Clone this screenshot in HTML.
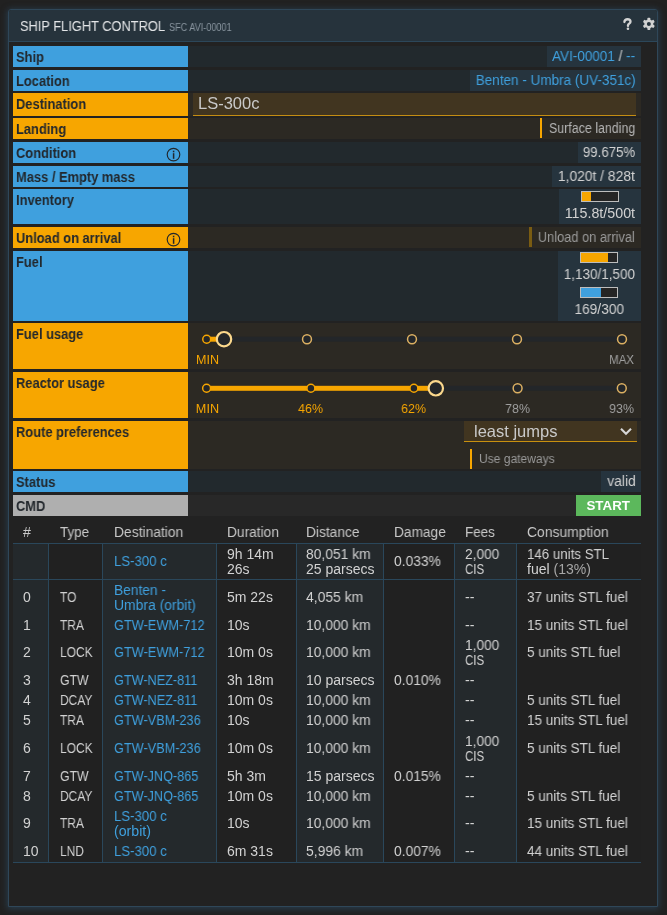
<!DOCTYPE html>
<html><head><meta charset="utf-8">
<style>
*{margin:0;padding:0;box-sizing:border-box}
html,body{width:667px;height:915px;overflow:hidden;background:#212121;font-family:"Liberation Sans",sans-serif}
.a{position:absolute}
.tx{position:absolute;white-space:nowrap;line-height:20px;will-change:transform}
#panel{position:absolute;left:8px;top:9px;width:650px;height:898px;border:1px solid #2f4759;border-radius:3px 3px 0 0;background:#222222;box-shadow:0 1px 6px 1px rgba(45,78,105,0.6)}
#hdr{position:absolute;left:9px;top:10px;width:648px;height:32px;border-radius:2px 2px 0 0;background:#26333c;border-bottom:1px solid #2c475a}
</style></head><body>
<div id="panel"></div>
<div id="hdr"></div>
<svg class="a" style="left:622px;top:17px" width="11" height="14" viewBox="0 0 11 14"><path d="M2.4 5.0 C2.4 2.9 3.7 2.25 5.5 2.25 C7.3 2.25 8.5 3.2 8.5 4.7 C8.5 6.5 6.3 6.7 6.0 8.2 L6.0 8.9" fill="none" stroke="#d4d4d4" stroke-width="2.3" stroke-linecap="round"/><circle cx="5.95" cy="11.7" r="1.3" fill="#d4d4d4"/></svg>
<svg class="a" style="left:642px;top:17px" width="14" height="14" viewBox="0 0 14 14"><g transform="translate(6.85 6.9)" fill="#d2d2d2"><circle r="4.5"/><rect x="-1.45" y="-6.1" width="2.9" height="3" rx="0.8" transform="rotate(0)"/><rect x="-1.45" y="-6.1" width="2.9" height="3" rx="0.8" transform="rotate(60)"/><rect x="-1.45" y="-6.1" width="2.9" height="3" rx="0.8" transform="rotate(120)"/><rect x="-1.45" y="-6.1" width="2.9" height="3" rx="0.8" transform="rotate(180)"/><rect x="-1.45" y="-6.1" width="2.9" height="3" rx="0.8" transform="rotate(240)"/><rect x="-1.45" y="-6.1" width="2.9" height="3" rx="0.8" transform="rotate(300)"/><circle r="2.0" fill="#26333c"/></g></svg>
<div class="a" style="left:13px;top:46px;width:175px;height:21px;background:#3fa0de;"></div>
<div class="a" style="left:188px;top:46px;width:453px;height:21px;background:#22292d;"></div>
<div class="a" style="left:13px;top:70px;width:175px;height:21px;background:#3fa0de;"></div>
<div class="a" style="left:188px;top:70px;width:453px;height:21px;background:#22292d;"></div>
<div class="a" style="left:13px;top:93px;width:175px;height:23px;background:#f7a600;"></div>
<div class="a" style="left:188px;top:93px;width:453px;height:23px;background:#2c2923;"></div>
<div class="a" style="left:13px;top:118px;width:175px;height:21px;background:#f7a600;"></div>
<div class="a" style="left:188px;top:118px;width:453px;height:21px;background:#2c2923;"></div>
<div class="a" style="left:13px;top:142px;width:175px;height:21px;background:#3fa0de;"></div>
<div class="a" style="left:188px;top:142px;width:453px;height:21px;background:#22292d;"></div>
<div class="a" style="left:13px;top:166px;width:175px;height:21px;background:#3fa0de;"></div>
<div class="a" style="left:188px;top:166px;width:453px;height:21px;background:#22292d;"></div>
<div class="a" style="left:13px;top:189px;width:175px;height:35px;background:#3fa0de;"></div>
<div class="a" style="left:188px;top:189px;width:453px;height:35px;background:#22292d;"></div>
<div class="a" style="left:13px;top:227px;width:175px;height:21px;background:#f7a600;"></div>
<div class="a" style="left:188px;top:227px;width:453px;height:21px;background:#2c2923;"></div>
<div class="a" style="left:13px;top:251px;width:175px;height:70px;background:#3fa0de;"></div>
<div class="a" style="left:188px;top:251px;width:453px;height:70px;background:#22292d;"></div>
<div class="a" style="left:13px;top:323px;width:175px;height:46px;background:#f7a600;"></div>
<div class="a" style="left:188px;top:323px;width:453px;height:46px;background:#2c2923;"></div>
<div class="a" style="left:13px;top:372px;width:175px;height:46px;background:#f7a600;"></div>
<div class="a" style="left:188px;top:372px;width:453px;height:46px;background:#2c2923;"></div>
<div class="a" style="left:13px;top:421px;width:175px;height:48px;background:#f7a600;"></div>
<div class="a" style="left:188px;top:421px;width:453px;height:48px;background:#2c2923;"></div>
<div class="a" style="left:13px;top:471px;width:175px;height:21px;background:#3fa0de;"></div>
<div class="a" style="left:188px;top:471px;width:453px;height:21px;background:#22292d;"></div>
<div class="a" style="left:13px;top:495px;width:175px;height:21px;background:#afafaf;"></div>
<div class="a" style="left:188px;top:495px;width:453px;height:21px;background:#282828;"></div>
<svg class="a" style="left:166px;top:146.5px" width="15" height="15" viewBox="0 0 15 15"><circle cx="7.5" cy="7.6" r="6.3" fill="none" stroke="#22272c" stroke-width="1.15"/><rect x="6.85" y="3.7" width="1.5" height="1.6" fill="#22272c"/><rect x="6.85" y="6.2" width="1.5" height="5.6" fill="#22272c"/></svg>
<svg class="a" style="left:166px;top:231.5px" width="15" height="15" viewBox="0 0 15 15"><circle cx="7.5" cy="7.6" r="6.3" fill="none" stroke="#22272c" stroke-width="1.15"/><rect x="6.85" y="3.7" width="1.5" height="1.6" fill="#22272c"/><rect x="6.85" y="6.2" width="1.5" height="5.6" fill="#22272c"/></svg>
<div class="a" style="left:546.8px;top:46px;width:94.20000000000005px;height:21px;background:#26343e;"></div>
<div class="a" style="left:469.7px;top:70px;width:171.3px;height:21px;background:#26343e;"></div>
<div class="a" style="left:193px;top:93px;width:443px;height:23px;background:#413520;border-bottom:1px solid #c48d12"></div>
<div class="a" style="left:540px;top:118px;width:2.4px;height:20px;background:#f7a600;"></div>
<div class="a" style="left:578px;top:142px;width:63px;height:21px;background:#26343e;"></div>
<div class="a" style="left:552px;top:166px;width:89px;height:21px;background:#26343e;"></div>
<div class="a" style="left:558.8px;top:189px;width:82.20000000000005px;height:35px;background:#26343e;"></div>
<div class="a" style="left:581px;top:191px;width:38px;height:11px;border:1px solid #bdbdbd;background:#252525"><div style="width:8.5px;height:9px;background:#f7a600"></div></div>
<div class="a" style="left:529px;top:227px;width:2.5px;height:20px;background:#7a5c12;"></div>
<div class="a" style="left:558px;top:251px;width:83px;height:70px;background:#26343e;"></div>
<div class="a" style="left:580px;top:252px;width:38px;height:11px;border:1px solid #bdbdbd;background:#252525"><div style="width:27px;height:9px;background:#f7a600"></div></div>
<div class="a" style="left:580px;top:287px;width:38px;height:11px;border:1px solid #bdbdbd;background:#252525"><div style="width:20px;height:9px;background:#3fa0de"></div></div>
<div class="a" style="left:464px;top:421px;width:172.5px;height:21px;background:#413520;border-bottom:1px solid #c8900f"></div>
<svg class="a" style="left:619px;top:427px" width="14" height="10" viewBox="0 0 14 10"><path d="M2 1.8 L7 6.8 L12 1.8" fill="none" stroke="#d6d6d6" stroke-width="2.1"/></svg>
<div class="a" style="left:469.5px;top:448.7px;width:2.5px;height:20.3px;background:#f7a600;"></div>
<div class="a" style="left:601px;top:471px;width:40px;height:21px;background:#26343e;"></div>
<div class="a" style="left:576px;top:495px;width:65px;height:21px;background:#5cb85c;"></div>
<svg class="a" style="left:188px;top:327px" width="453" height="24" viewBox="0 0 453 24"><rect x="18.70" y="9.70" width="415.30" height="5" fill="#232629"/><rect x="18.70" y="9.70" width="17.30" height="5" fill="#f7a600"/><circle cx="18.70" cy="12.20" r="3.95" fill="#232629" stroke="#f7a600" stroke-width="1.5"/><circle cx="119.00" cy="12.20" r="4.45" fill="#232629" stroke="#dcb062" stroke-width="1.5"/><circle cx="224.00" cy="12.20" r="4.45" fill="#232629" stroke="#dcb062" stroke-width="1.5"/><circle cx="329.00" cy="12.20" r="4.45" fill="#232629" stroke="#dcb062" stroke-width="1.5"/><circle cx="434.00" cy="12.20" r="4.45" fill="#232629" stroke="#dcb062" stroke-width="1.5"/><circle cx="36.00" cy="12.20" r="7.2" fill="#232629" stroke="#fbd88c" stroke-width="2.2"/></svg>
<svg class="a" style="left:188px;top:376px" width="453" height="24" viewBox="0 0 453 24"><rect x="18.60" y="9.80" width="415.20" height="5" fill="#232629"/><rect x="18.60" y="9.80" width="229.20" height="5" fill="#f7a600"/><circle cx="18.60" cy="12.30" r="3.95" fill="#232629" stroke="#f7a600" stroke-width="1.5"/><circle cx="122.90" cy="12.30" r="3.95" fill="#232629" stroke="#f7a600" stroke-width="1.5"/><circle cx="225.90" cy="12.30" r="3.95" fill="#232629" stroke="#f7a600" stroke-width="1.5"/><circle cx="329.60" cy="12.30" r="4.45" fill="#232629" stroke="#dcb062" stroke-width="1.5"/><circle cx="433.80" cy="12.30" r="4.45" fill="#232629" stroke="#dcb062" stroke-width="1.5"/><circle cx="247.80" cy="12.30" r="7.2" fill="#232629" stroke="#fbd88c" stroke-width="2.2"/></svg>
<div class="a" style="left:13px;top:544px;width:35px;height:318px;background:#24292c;"></div>
<div class="a" style="left:48px;top:544px;width:54px;height:318px;background:#212121;"></div>
<div class="a" style="left:102px;top:544px;width:114.5px;height:318px;background:#24292c;"></div>
<div class="a" style="left:216.5px;top:544px;width:80.0px;height:318px;background:#212121;"></div>
<div class="a" style="left:296.5px;top:544px;width:87.0px;height:318px;background:#24292c;"></div>
<div class="a" style="left:383.5px;top:544px;width:71.0px;height:318px;background:#212121;"></div>
<div class="a" style="left:454.5px;top:544px;width:62.2px;height:318px;background:#24292c;"></div>
<div class="a" style="left:516.7px;top:544px;width:124.3px;height:318px;background:#212121;"></div>
<div class="a" style="left:13px;top:543px;width:628px;height:1px;background:#2a475b;"></div>
<div class="a" style="left:13px;top:579px;width:628px;height:1px;background:#2a475b;"></div>
<div class="a" style="left:13px;top:862px;width:628px;height:1px;background:#2a475b;"></div>
<div class="a" style="left:47.5px;top:543px;width:1px;height:319px;background:#2a475b;"></div>
<div class="a" style="left:101.5px;top:543px;width:1px;height:319px;background:#2a475b;"></div>
<div class="a" style="left:216.0px;top:543px;width:1px;height:319px;background:#2a475b;"></div>
<div class="a" style="left:296.0px;top:543px;width:1px;height:319px;background:#2a475b;"></div>
<div class="a" style="left:383.0px;top:543px;width:1px;height:319px;background:#2a475b;"></div>
<div class="a" style="left:454.0px;top:543px;width:1px;height:319px;background:#2a475b;"></div>
<div class="a" style="left:516.2px;top:543px;width:1px;height:319px;background:#2a475b;"></div>
<div class="tx" style="left:19.50px;top:16.05px;font-size:14px;color:#e4e6e8;transform:scaleX(0.9166);transform-origin:left">SHIP FLIGHT CONTROL</div>
<div class="tx" style="left:168.60px;top:17.84px;font-size:10px;color:#8a96a0;transform:scaleX(0.9105);transform-origin:left">SFC AVI-00001</div>
<div class="tx" style="left:15.90px;top:46.75px;font-size:14px;color:#22272c;font-weight:bold;transform:scaleX(0.9200);transform-origin:left">Ship</div>
<div class="tx" style="left:15.90px;top:70.75px;font-size:14px;color:#22272c;font-weight:bold;transform:scaleX(0.9200);transform-origin:left">Location</div>
<div class="tx" style="left:15.90px;top:93.75px;font-size:14px;color:#22272c;font-weight:bold;transform:scaleX(0.9200);transform-origin:left">Destination</div>
<div class="tx" style="left:15.90px;top:118.75px;font-size:14px;color:#22272c;font-weight:bold;transform:scaleX(0.9200);transform-origin:left">Landing</div>
<div class="tx" style="left:15.90px;top:142.75px;font-size:14px;color:#22272c;font-weight:bold;transform:scaleX(0.9200);transform-origin:left">Condition</div>
<div class="tx" style="left:15.90px;top:166.75px;font-size:14px;color:#22272c;font-weight:bold;transform:scaleX(0.9200);transform-origin:left">Mass / Empty mass</div>
<div class="tx" style="left:15.90px;top:189.75px;font-size:14px;color:#22272c;font-weight:bold;transform:scaleX(0.9200);transform-origin:left">Inventory</div>
<div class="tx" style="left:15.90px;top:227.75px;font-size:14px;color:#22272c;font-weight:bold;transform:scaleX(0.9200);transform-origin:left">Unload on arrival</div>
<div class="tx" style="left:15.90px;top:251.75px;font-size:14px;color:#22272c;font-weight:bold;transform:scaleX(0.9200);transform-origin:left">Fuel</div>
<div class="tx" style="left:15.90px;top:323.75px;font-size:14px;color:#22272c;font-weight:bold;transform:scaleX(0.9200);transform-origin:left">Fuel usage</div>
<div class="tx" style="left:15.90px;top:372.75px;font-size:14px;color:#22272c;font-weight:bold;transform:scaleX(0.9200);transform-origin:left">Reactor usage</div>
<div class="tx" style="left:15.90px;top:421.75px;font-size:14px;color:#22272c;font-weight:bold;transform:scaleX(0.9200);transform-origin:left">Route preferences</div>
<div class="tx" style="left:15.90px;top:471.75px;font-size:14px;color:#22272c;font-weight:bold;transform:scaleX(0.9200);transform-origin:left">Status</div>
<div class="tx" style="left:15.90px;top:495.75px;font-size:14px;color:#22272c;font-weight:bold;transform:scaleX(0.9200);transform-origin:left">CMD</div>
<div class="tx" style="left:549.17px;top:46.35px;font-size:14px;color:#d2d2d2;transform:scaleX(0.9649);transform-origin:right"><span style="color:#3fa0de">AVI-00001</span> / <span style="color:#3fa0de">--</span></div>
<div class="tx" style="left:469.57px;top:70.35px;font-size:14px;color:#3fa0de;transform:scaleX(0.9654);transform-origin:right">Benten - Umbra (UV-351c)</div>
<div class="tx" style="left:198.20px;top:93.28px;font-size:16.5px;color:#c9c9c9">LS-300c</div>
<div class="tx" style="left:538.00px;top:117.75px;font-size:14px;color:#b4b4b4;transform:scaleX(0.8870);transform-origin:right">Surface landing</div>
<div class="tx" style="left:580.02px;top:142.05px;font-size:14px;color:#d2d2d2;transform:scaleX(0.9479);transform-origin:right">99.675%</div>
<div class="tx" style="left:557.46px;top:165.85px;font-size:14px;color:#d2d2d2;transform:scaleX(0.9892);transform-origin:right">1,020t / 828t</div>
<div class="tx" style="left:566.27px;top:203.25px;font-size:14px;color:#d2d2d2;transform:scaleX(1.0184);transform-origin:right">115.8t/500t</div>
<div class="tx" style="left:529.46px;top:226.95px;font-size:14px;color:#9a9a9a;transform:scaleX(0.9164);transform-origin:right">Unload on arrival</div>
<div class="tx" style="left:561.33px;top:263.85px;font-size:14px;color:#d2d2d2;transform:scaleX(0.9626);transform-origin:right">1,130/1,500</div>
<div class="tx" style="left:574.10px;top:298.75px;font-size:14px;color:#d2d2d2;transform:scaleX(0.9801);transform-origin:center">169/300</div>
<div class="tx" style="left:473.50px;top:420.78px;font-size:16.5px;color:#c9c9c9">least jumps</div>
<div class="tx" style="left:478.80px;top:449.07px;font-size:12.5px;color:#9a9a9a;transform:scaleX(0.9641);transform-origin:left">Use gateways</div>
<div class="tx" style="left:606.50px;top:471.15px;font-size:14px;color:#d2d2d2;transform:scaleX(0.9897);transform-origin:right">valid</div>
<div class="tx" style="left:586.71px;top:495.50px;font-size:13px;color:#ffffff;font-weight:bold;transform:scaleX(1.0265);transform-origin:center">START</div>
<div class="tx" style="left:195.74px;top:349.97px;font-size:12.5px;color:#f7a600;transform:scaleX(1.0034);transform-origin:center">MIN</div>
<div class="tx" style="left:608.25px;top:349.57px;font-size:12.5px;color:#a0a0a0;transform:scaleX(0.9116);transform-origin:center">MAX</div>
<div class="tx" style="left:195.74px;top:398.57px;font-size:12.5px;color:#f7a600;transform:scaleX(1.0121);transform-origin:center">MIN</div>
<div class="tx" style="left:298.38px;top:398.57px;font-size:12.5px;color:#f7a600;transform:scaleX(0.9877);transform-origin:center">46%</div>
<div class="tx" style="left:401.38px;top:398.57px;font-size:12.5px;color:#f7a600;transform:scaleX(0.9877);transform-origin:center">62%</div>
<div class="tx" style="left:505.08px;top:398.57px;font-size:12.5px;color:#a0a0a0;transform:scaleX(0.9877);transform-origin:center">78%</div>
<div class="tx" style="left:609.28px;top:398.57px;font-size:12.5px;color:#a0a0a0;transform:scaleX(0.9877);transform-origin:center">93%</div>
<div class="tx" style="left:23.30px;top:522.15px;font-size:14px;color:#c8c8c8;transform:scaleX(1.0113);transform-origin:left">#</div>
<div class="tx" style="left:59.50px;top:522.15px;font-size:14px;color:#c8c8c8;transform:scaleX(0.9602);transform-origin:left">Type</div>
<div class="tx" style="left:113.50px;top:522.15px;font-size:14px;color:#c8c8c8;transform:scaleX(0.9884);transform-origin:left">Destination</div>
<div class="tx" style="left:226.80px;top:522.15px;font-size:14px;color:#c8c8c8;transform:scaleX(0.9814);transform-origin:left">Duration</div>
<div class="tx" style="left:305.80px;top:522.15px;font-size:14px;color:#c8c8c8;transform:scaleX(0.9820);transform-origin:left">Distance</div>
<div class="tx" style="left:394.00px;top:522.15px;font-size:14px;color:#c8c8c8;transform:scaleX(0.9793);transform-origin:left">Damage</div>
<div class="tx" style="left:464.60px;top:522.15px;font-size:14px;color:#c8c8c8;transform:scaleX(0.9612);transform-origin:left">Fees</div>
<div class="tx" style="left:527.30px;top:522.15px;font-size:14px;color:#c8c8c8;transform:scaleX(0.9901);transform-origin:left">Consumption</div>
<div class="tx" style="left:113.50px;top:551.05px;font-size:14px;color:#3fa0de;transform:scaleX(0.9439);transform-origin:left">LS-300 c</div>
<div class="tx" style="left:226.80px;top:543.55px;font-size:14px;color:#d2d2d2;transform:scaleX(0.9910);transform-origin:left">9h 14m</div>
<div class="tx" style="left:226.80px;top:558.55px;font-size:14px;color:#d2d2d2;transform:scaleX(0.9834);transform-origin:left">26s</div>
<div class="tx" style="left:305.80px;top:543.55px;font-size:14px;color:#d2d2d2;transform:scaleX(0.9883);transform-origin:left">80,051 km</div>
<div class="tx" style="left:305.80px;top:558.55px;font-size:14px;color:#d2d2d2">25 parsecs</div>
<div class="tx" style="left:394.00px;top:551.05px;font-size:14px;color:#d2d2d2;transform:scaleX(0.9855);transform-origin:left">0.033%</div>
<div class="tx" style="left:464.60px;top:543.55px;font-size:14px;color:#d2d2d2;transform:scaleX(0.9779);transform-origin:left">2,000</div>
<div class="tx" style="left:464.60px;top:558.55px;font-size:14px;color:#d2d2d2;transform:scaleX(0.8231);transform-origin:left">CIS</div>
<div class="tx" style="left:527.30px;top:543.55px;font-size:14px;color:#d2d2d2;transform:scaleX(0.9506);transform-origin:left">146 units STL</div>
<div class="tx" style="left:527.30px;top:558.55px;font-size:14px;color:#d2d2d2;transform:scaleX(1.0027);transform-origin:left">fuel <span style="color:#a6a6a6">(13%)</span></div>
<div class="tx" style="left:23.30px;top:587.15px;font-size:14px;color:#d2d2d2;transform:scaleX(0.9723);transform-origin:left">0</div>
<div class="tx" style="left:59.50px;top:587.15px;font-size:14px;color:#d2d2d2;transform:scaleX(0.8566);transform-origin:left">TO</div>
<div class="tx" style="left:113.50px;top:579.65px;font-size:14px;color:#3fa0de;transform:scaleX(0.9831);transform-origin:left">Benten -</div>
<div class="tx" style="left:113.50px;top:594.65px;font-size:14px;color:#3fa0de;transform:scaleX(0.9929);transform-origin:left">Umbra (orbit)</div>
<div class="tx" style="left:226.80px;top:587.15px;font-size:14px;color:#d2d2d2;transform:scaleX(0.9908);transform-origin:left">5m 22s</div>
<div class="tx" style="left:305.80px;top:587.15px;font-size:14px;color:#d2d2d2;transform:scaleX(0.9905);transform-origin:left">4,055 km</div>
<div class="tx" style="left:464.60px;top:587.15px;font-size:14px;color:#d2d2d2;transform:scaleX(1.0188);transform-origin:left">--</div>
<div class="tx" style="left:527.30px;top:587.15px;font-size:14px;color:#d2d2d2;transform:scaleX(0.9645);transform-origin:left">37 units STL fuel</div>
<div class="tx" style="left:23.30px;top:615.15px;font-size:14px;color:#d2d2d2;transform:scaleX(0.9723);transform-origin:left">1</div>
<div class="tx" style="left:59.50px;top:615.15px;font-size:14px;color:#d2d2d2;transform:scaleX(0.8525);transform-origin:left">TRA</div>
<div class="tx" style="left:113.50px;top:615.15px;font-size:14px;color:#3fa0de;transform:scaleX(0.9121);transform-origin:left">GTW-EWM-712</div>
<div class="tx" style="left:226.80px;top:615.15px;font-size:14px;color:#d2d2d2;transform:scaleX(0.9834);transform-origin:left">10s</div>
<div class="tx" style="left:305.80px;top:615.15px;font-size:14px;color:#d2d2d2;transform:scaleX(0.9883);transform-origin:left">10,000 km</div>
<div class="tx" style="left:464.60px;top:615.15px;font-size:14px;color:#d2d2d2;transform:scaleX(1.0188);transform-origin:left">--</div>
<div class="tx" style="left:527.30px;top:615.15px;font-size:14px;color:#d2d2d2;transform:scaleX(0.9645);transform-origin:left">15 units STL fuel</div>
<div class="tx" style="left:23.30px;top:642.15px;font-size:14px;color:#d2d2d2;transform:scaleX(0.9723);transform-origin:left">2</div>
<div class="tx" style="left:59.50px;top:642.15px;font-size:14px;color:#d2d2d2;transform:scaleX(0.8556);transform-origin:left">LOCK</div>
<div class="tx" style="left:113.50px;top:642.15px;font-size:14px;color:#3fa0de;transform:scaleX(0.9121);transform-origin:left">GTW-EWM-712</div>
<div class="tx" style="left:226.80px;top:642.15px;font-size:14px;color:#d2d2d2;transform:scaleX(0.9908);transform-origin:left">10m 0s</div>
<div class="tx" style="left:305.80px;top:642.15px;font-size:14px;color:#d2d2d2;transform:scaleX(0.9883);transform-origin:left">10,000 km</div>
<div class="tx" style="left:464.60px;top:634.65px;font-size:14px;color:#d2d2d2;transform:scaleX(0.9779);transform-origin:left">1,000</div>
<div class="tx" style="left:464.60px;top:649.65px;font-size:14px;color:#d2d2d2;transform:scaleX(0.8231);transform-origin:left">CIS</div>
<div class="tx" style="left:527.30px;top:642.15px;font-size:14px;color:#d2d2d2;transform:scaleX(0.9638);transform-origin:left">5 units STL fuel</div>
<div class="tx" style="left:23.30px;top:670.15px;font-size:14px;color:#d2d2d2;transform:scaleX(0.9723);transform-origin:left">3</div>
<div class="tx" style="left:59.50px;top:670.15px;font-size:14px;color:#d2d2d2;transform:scaleX(0.8736);transform-origin:left">GTW</div>
<div class="tx" style="left:113.50px;top:670.15px;font-size:14px;color:#3fa0de;transform:scaleX(0.9052);transform-origin:left">GTW-NEZ-811</div>
<div class="tx" style="left:226.80px;top:670.15px;font-size:14px;color:#d2d2d2;transform:scaleX(0.9910);transform-origin:left">3h 18m</div>
<div class="tx" style="left:305.80px;top:670.15px;font-size:14px;color:#d2d2d2">10 parsecs</div>
<div class="tx" style="left:394.00px;top:670.15px;font-size:14px;color:#d2d2d2;transform:scaleX(0.9855);transform-origin:left">0.010%</div>
<div class="tx" style="left:464.60px;top:670.15px;font-size:14px;color:#d2d2d2;transform:scaleX(1.0188);transform-origin:left">--</div>
<div class="tx" style="left:23.30px;top:690.15px;font-size:14px;color:#d2d2d2;transform:scaleX(0.9723);transform-origin:left">4</div>
<div class="tx" style="left:59.50px;top:690.15px;font-size:14px;color:#d2d2d2;transform:scaleX(0.8546);transform-origin:left">DCAY</div>
<div class="tx" style="left:113.50px;top:690.15px;font-size:14px;color:#3fa0de;transform:scaleX(0.9052);transform-origin:left">GTW-NEZ-811</div>
<div class="tx" style="left:226.80px;top:690.15px;font-size:14px;color:#d2d2d2;transform:scaleX(0.9908);transform-origin:left">10m 0s</div>
<div class="tx" style="left:305.80px;top:690.15px;font-size:14px;color:#d2d2d2;transform:scaleX(0.9883);transform-origin:left">10,000 km</div>
<div class="tx" style="left:464.60px;top:690.15px;font-size:14px;color:#d2d2d2;transform:scaleX(1.0188);transform-origin:left">--</div>
<div class="tx" style="left:527.30px;top:690.15px;font-size:14px;color:#d2d2d2;transform:scaleX(0.9638);transform-origin:left">5 units STL fuel</div>
<div class="tx" style="left:23.30px;top:710.15px;font-size:14px;color:#d2d2d2;transform:scaleX(0.9723);transform-origin:left">5</div>
<div class="tx" style="left:59.50px;top:710.15px;font-size:14px;color:#d2d2d2;transform:scaleX(0.8525);transform-origin:left">TRA</div>
<div class="tx" style="left:113.50px;top:710.15px;font-size:14px;color:#3fa0de;transform:scaleX(0.9085);transform-origin:left">GTW-VBM-236</div>
<div class="tx" style="left:226.80px;top:710.15px;font-size:14px;color:#d2d2d2;transform:scaleX(0.9834);transform-origin:left">10s</div>
<div class="tx" style="left:305.80px;top:710.15px;font-size:14px;color:#d2d2d2;transform:scaleX(0.9883);transform-origin:left">10,000 km</div>
<div class="tx" style="left:464.60px;top:710.15px;font-size:14px;color:#d2d2d2;transform:scaleX(1.0188);transform-origin:left">--</div>
<div class="tx" style="left:527.30px;top:710.15px;font-size:14px;color:#d2d2d2;transform:scaleX(0.9645);transform-origin:left">15 units STL fuel</div>
<div class="tx" style="left:23.30px;top:738.15px;font-size:14px;color:#d2d2d2;transform:scaleX(0.9723);transform-origin:left">6</div>
<div class="tx" style="left:59.50px;top:738.15px;font-size:14px;color:#d2d2d2;transform:scaleX(0.8556);transform-origin:left">LOCK</div>
<div class="tx" style="left:113.50px;top:738.15px;font-size:14px;color:#3fa0de;transform:scaleX(0.9085);transform-origin:left">GTW-VBM-236</div>
<div class="tx" style="left:226.80px;top:738.15px;font-size:14px;color:#d2d2d2;transform:scaleX(0.9908);transform-origin:left">10m 0s</div>
<div class="tx" style="left:305.80px;top:738.15px;font-size:14px;color:#d2d2d2;transform:scaleX(0.9883);transform-origin:left">10,000 km</div>
<div class="tx" style="left:464.60px;top:730.65px;font-size:14px;color:#d2d2d2;transform:scaleX(0.9779);transform-origin:left">1,000</div>
<div class="tx" style="left:464.60px;top:745.65px;font-size:14px;color:#d2d2d2;transform:scaleX(0.8231);transform-origin:left">CIS</div>
<div class="tx" style="left:527.30px;top:738.15px;font-size:14px;color:#d2d2d2;transform:scaleX(0.9638);transform-origin:left">5 units STL fuel</div>
<div class="tx" style="left:23.30px;top:766.15px;font-size:14px;color:#d2d2d2;transform:scaleX(0.9723);transform-origin:left">7</div>
<div class="tx" style="left:59.50px;top:766.15px;font-size:14px;color:#d2d2d2;transform:scaleX(0.8736);transform-origin:left">GTW</div>
<div class="tx" style="left:113.50px;top:766.15px;font-size:14px;color:#3fa0de;transform:scaleX(0.9062);transform-origin:left">GTW-JNQ-865</div>
<div class="tx" style="left:226.80px;top:766.15px;font-size:14px;color:#d2d2d2;transform:scaleX(0.9947);transform-origin:left">5h 3m</div>
<div class="tx" style="left:305.80px;top:766.15px;font-size:14px;color:#d2d2d2">15 parsecs</div>
<div class="tx" style="left:394.00px;top:766.15px;font-size:14px;color:#d2d2d2;transform:scaleX(0.9855);transform-origin:left">0.015%</div>
<div class="tx" style="left:464.60px;top:766.15px;font-size:14px;color:#d2d2d2;transform:scaleX(1.0188);transform-origin:left">--</div>
<div class="tx" style="left:23.30px;top:786.15px;font-size:14px;color:#d2d2d2;transform:scaleX(0.9723);transform-origin:left">8</div>
<div class="tx" style="left:59.50px;top:786.15px;font-size:14px;color:#d2d2d2;transform:scaleX(0.8546);transform-origin:left">DCAY</div>
<div class="tx" style="left:113.50px;top:786.15px;font-size:14px;color:#3fa0de;transform:scaleX(0.9062);transform-origin:left">GTW-JNQ-865</div>
<div class="tx" style="left:226.80px;top:786.15px;font-size:14px;color:#d2d2d2;transform:scaleX(0.9908);transform-origin:left">10m 0s</div>
<div class="tx" style="left:305.80px;top:786.15px;font-size:14px;color:#d2d2d2;transform:scaleX(0.9883);transform-origin:left">10,000 km</div>
<div class="tx" style="left:464.60px;top:786.15px;font-size:14px;color:#d2d2d2;transform:scaleX(1.0188);transform-origin:left">--</div>
<div class="tx" style="left:527.30px;top:786.15px;font-size:14px;color:#d2d2d2;transform:scaleX(0.9638);transform-origin:left">5 units STL fuel</div>
<div class="tx" style="left:23.30px;top:813.15px;font-size:14px;color:#d2d2d2;transform:scaleX(0.9723);transform-origin:left">9</div>
<div class="tx" style="left:59.50px;top:813.15px;font-size:14px;color:#d2d2d2;transform:scaleX(0.8525);transform-origin:left">TRA</div>
<div class="tx" style="left:113.50px;top:805.65px;font-size:14px;color:#3fa0de;transform:scaleX(0.9439);transform-origin:left">LS-300 c</div>
<div class="tx" style="left:113.50px;top:820.65px;font-size:14px;color:#3fa0de;transform:scaleX(1.0125);transform-origin:left">(orbit)</div>
<div class="tx" style="left:226.80px;top:813.15px;font-size:14px;color:#d2d2d2;transform:scaleX(0.9834);transform-origin:left">10s</div>
<div class="tx" style="left:305.80px;top:813.15px;font-size:14px;color:#d2d2d2;transform:scaleX(0.9883);transform-origin:left">10,000 km</div>
<div class="tx" style="left:464.60px;top:813.15px;font-size:14px;color:#d2d2d2;transform:scaleX(1.0188);transform-origin:left">--</div>
<div class="tx" style="left:527.30px;top:813.15px;font-size:14px;color:#d2d2d2;transform:scaleX(0.9645);transform-origin:left">15 units STL fuel</div>
<div class="tx" style="left:23.30px;top:841.15px;font-size:14px;color:#d2d2d2;transform:scaleX(0.9723);transform-origin:left">10</div>
<div class="tx" style="left:59.50px;top:841.15px;font-size:14px;color:#d2d2d2;transform:scaleX(0.8526);transform-origin:left">LND</div>
<div class="tx" style="left:113.50px;top:841.15px;font-size:14px;color:#3fa0de;transform:scaleX(0.9439);transform-origin:left">LS-300 c</div>
<div class="tx" style="left:226.80px;top:841.15px;font-size:14px;color:#d2d2d2;transform:scaleX(0.9908);transform-origin:left">6m 31s</div>
<div class="tx" style="left:305.80px;top:841.15px;font-size:14px;color:#d2d2d2;transform:scaleX(0.9905);transform-origin:left">5,996 km</div>
<div class="tx" style="left:394.00px;top:841.15px;font-size:14px;color:#d2d2d2;transform:scaleX(0.9855);transform-origin:left">0.007%</div>
<div class="tx" style="left:464.60px;top:841.15px;font-size:14px;color:#d2d2d2;transform:scaleX(1.0188);transform-origin:left">--</div>
<div class="tx" style="left:527.30px;top:841.15px;font-size:14px;color:#d2d2d2;transform:scaleX(0.9645);transform-origin:left">44 units STL fuel</div>
</body></html>
